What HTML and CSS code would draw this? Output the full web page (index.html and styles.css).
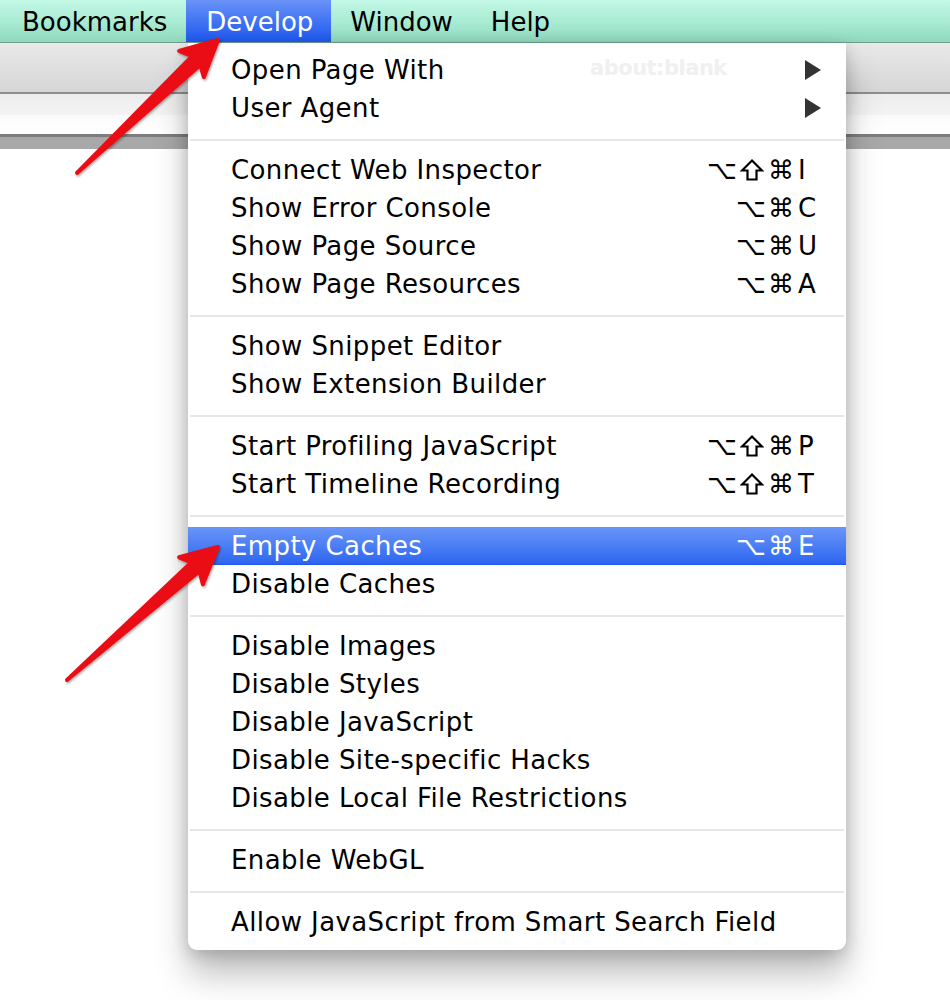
FILE: index.html
```html
<!DOCTYPE html>
<html>
<head>
<meta charset="utf-8">
<link rel="stylesheet" href="styles.css">
</head>
<body>
<div class="screen">
  <div class="menubar">
    <span class="mb-item">Bookmarks</span>
    <span class="mb-item active">Develop</span>
    <span class="mb-item">Window</span>
    <span class="mb-item">Help</span>
  </div>
  <div class="window">
    <div class="toolbar"></div>
    <div class="address"></div>
    <div class="tabbar"></div>
    <div class="content"></div>
  </div>

  <div class="menu">
    <span class="ghost">about:blank</span>
    <div class="item"><span class="label">Open Page With</span><span class="submenu"></span></div>
    <div class="item"><span class="label">User Agent</span><span class="submenu"></span></div>
    <div class="sep"></div>
    <div class="item"><span class="label">Connect Web Inspector</span><span class="sc"><span class="mods">⌥<svg class="shift" viewBox="0 0 24 24"><path d="M12 2.5 L22 12.5 H16.5 V21.5 H7.5 V12.5 H2 Z"/></svg>⌘</span><span class="key">I</span></span></div>
    <div class="item"><span class="label">Show Error Console</span><span class="sc"><span class="mods">⌥⌘</span><span class="key">C</span></span></div>
    <div class="item"><span class="label">Show Page Source</span><span class="sc"><span class="mods">⌥⌘</span><span class="key">U</span></span></div>
    <div class="item"><span class="label">Show Page Resources</span><span class="sc"><span class="mods">⌥⌘</span><span class="key">A</span></span></div>
    <div class="sep"></div>
    <div class="item"><span class="label">Show Snippet Editor</span></div>
    <div class="item"><span class="label">Show Extension Builder</span></div>
    <div class="sep"></div>
    <div class="item"><span class="label">Start Profiling JavaScript</span><span class="sc"><span class="mods">⌥<svg class="shift" viewBox="0 0 24 24"><path d="M12 2.5 L22 12.5 H16.5 V21.5 H7.5 V12.5 H2 Z"/></svg>⌘</span><span class="key">P</span></span></div>
    <div class="item"><span class="label">Start Timeline Recording</span><span class="sc"><span class="mods">⌥<svg class="shift" viewBox="0 0 24 24"><path d="M12 2.5 L22 12.5 H16.5 V21.5 H7.5 V12.5 H2 Z"/></svg>⌘</span><span class="key">T</span></span></div>
    <div class="sep"></div>
    <div class="item selected"><span class="label">Empty Caches</span><span class="sc"><span class="mods">⌥⌘</span><span class="key">E</span></span></div>
    <div class="item"><span class="label">Disable Caches</span></div>
    <div class="sep"></div>
    <div class="item"><span class="label">Disable Images</span></div>
    <div class="item"><span class="label">Disable Styles</span></div>
    <div class="item"><span class="label">Disable JavaScript</span></div>
    <div class="item"><span class="label">Disable Site-specific Hacks</span></div>
    <div class="item"><span class="label">Disable Local File Restrictions</span></div>
    <div class="sep"></div>
    <div class="item"><span class="label">Enable WebGL</span></div>
    <div class="sep"></div>
    <div class="item"><span class="label">Allow JavaScript from Smart Search Field</span></div>
  </div>

  <svg class="arrows" width="950" height="1000" viewBox="0 0 950 1000">
    <defs>
      <filter id="sh" x="-20%" y="-20%" width="140%" height="140%">
        <feDropShadow dx="1" dy="1.5" stdDeviation="1.2" flood-color="#000" flood-opacity="0.35"/>
      </filter>
    </defs>
    <polygon class="arrow" filter="url(#sh)" points="77,173 192.1,56.2 179.1,50.9 218,40 203.9,77.1 200.3,65"/>
    <polygon class="arrow" filter="url(#sh)" points="67,680 191.5,562.3 179.1,557.3 218,547 202.9,584.3 199.5,571.3"/>
  </svg>
</div>
</body>
</html>
```

FILE: styles.css
```css
html, body {
  margin: 0;
  padding: 0;
  background: #ffffff;
}

.screen {
  position: relative;
  width: 950px;
  height: 1000px;
  overflow: hidden;
  font-family: "DejaVu Sans", "Liberation Sans", sans-serif;
  background: #ffffff;
}

.menubar {
  display: flex;
  align-items: stretch;
  height: 42px;
  padding-left: 3px;
  background: linear-gradient(#c2f8e6, #a7ead2 55%, #8fd8bd);
  border-bottom: 1px solid #6f9f8c;
  font-size: 26px;
  color: #000;
}

.mb-item {
  display: flex;
  align-items: center;
  padding: 2px 19px 0 19px;
  line-height: 1;
}

.mb-item.active {
  background: linear-gradient(#6a93f8, #3a6ef2 60%, #1f58ee);
  color: #ffffff;
  padding-left: 20px;
  padding-right: 18px;
}

.window {
  display: flex;
  flex-direction: column;
}

.toolbar {
  height: 49px;
  background: linear-gradient(#e9e9e9, #d6d6d6);
  border-bottom: 2px solid #8e8e8e;
}

.address {
  height: 40px;
  background: linear-gradient(#ededed 0, #f3f3f3 50%, #fbfbfb 55%, #ffffff 100%);
}

.tabbar {
  height: 12px;
  background: #a8a8a8;
  border-top: 3px solid #7d7d7d;
}

.content {
  flex: 1;
  background: #ffffff;
}

.menu {
  position: absolute;
  left: 188px;
  top: 43px;
  width: 658px;
  padding: 8px 0 9px 0;
  background: #ffffff;
  border-radius: 0 0 9px 9px;
  box-shadow: 0 24px 34px rgba(0, 0, 0, 0.26), 0 4px 16px rgba(0, 0, 0, 0.18);
  font-size: 26px;
  color: #000;
}

.ghost {
  position: absolute;
  left: 402px;
  top: 13px;
  font-weight: bold;
  font-size: 21px;
  color: #f0f0f0;
  letter-spacing: -0.5px;
}

.item {
  position: relative;
  display: flex;
  align-items: center;
  justify-content: space-between;
  height: 38px;
  padding: 0 28px 0 43px;
  line-height: 38px;
  white-space: nowrap;
}

.label {
  letter-spacing: 0.4px;
}

.item.selected {
  background: linear-gradient(#6b95f8, #4a7ef4 50%, #2f66f0 95%, #1a54e8);
  color: #ffffff;
}

.sc {
  display: flex;
  align-items: center;
}

.mods {
  display: flex;
  align-items: center;
  letter-spacing: 2px;
}

.shift {
  width: 24px;
  height: 24px;
  margin: 0 4px 0 1px;
  fill: none;
  stroke: currentColor;
  stroke-width: 2.2;
  stroke-linejoin: miter;
}

.key {
  display: inline-block;
  width: 20px;
  padding-left: 2px;
  text-align: left;
}

.submenu {
  width: 0;
  height: 0;
  margin-right: -3px;
  border-left: 16px solid #333333;
  border-top: 10px solid transparent;
  border-bottom: 10px solid transparent;
}

.sep {
  height: 24px;
  display: flex;
  align-items: center;
  padding: 0 2px;
}

.sep::before {
  content: "";
  display: block;
  flex: 1;
  height: 2px;
  margin-top: 2px;
  background: #e6e6e6;
}

.arrows {
  position: absolute;
  left: 0;
  top: 0;
  pointer-events: none;
}

.arrow {
  fill: #ea0a12;
  stroke: #ea0a12;
  stroke-width: 4;
  stroke-linejoin: round;
}
```
